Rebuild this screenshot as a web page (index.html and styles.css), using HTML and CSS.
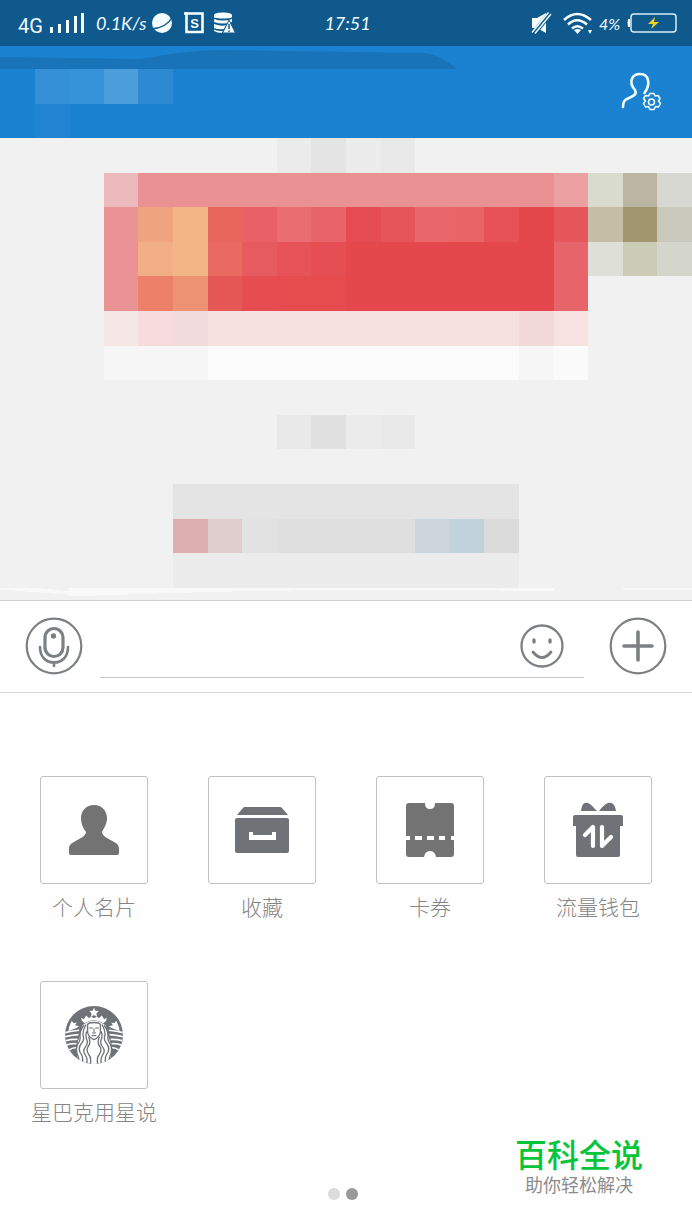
FILE: index.html
```html
<!DOCTYPE html>
<html lang="zh-CN">
<head>
<meta charset="utf-8">
<meta name="viewport" content="width=device-width, initial-scale=1">
<title>聊天</title>
<link rel="stylesheet" href="styles.css">
</head>
<body>
<div class="screen">
  <div class="status">
    <div class="status-left">
      <span class="network">4G</span>
      <svg class="signal" width="36" height="22" viewBox="0 0 36 22" fill="#f0fcff"><path d="M1 15h3v6H1zM9 12h3v9H9zM17 8h3v13h-3zM25 4h3v17h-3zM32 1h3v20h-3z"/></svg>
      <span class="hand speed">0.1K/s</span>
      <svg class="planet" width="22" height="22" viewBox="0 0 22 22"><circle cx="11" cy="11" r="10" fill="#f4feff"/><path d="M0 17Q16 16 22 4" fill="none" stroke="#10598d" stroke-width="1.500"/></svg>
      <svg class="square-s" width="20" height="22" viewBox="0 0 20 22"><path d="M0 1.500h18.500v18.500H2.500V0" fill="none" stroke="#f4feff" stroke-width="2.600"/><text x="10.500" y="16" text-anchor="middle" class="s-letter">S</text></svg>
      <svg width="23" height="22" viewBox="0 0 23 22"><g fill="#f4feff"><path d="M1 3C1-.5 19-.5 19 3v2C19 7 1 7 1 5zM1 7q9 3 18 0v3q-9 3-18 0zM1 12q8 3 12 1l-2 4q-6 1-10-1zM1 17.500q4 2 9 1.500l-1 2q-5 0-8-2z"/><path d="M16 8l6.500 13h-13z" stroke="#10598d"/></g><path d="M16 12v5M16 18.500v1.500" stroke="#10598d" stroke-width="1.500"/></svg>
    </div>
    <span class="hand">17:51</span>
    <div class="status-right">
      <svg width="21" height="22" viewBox="0 0 21 22"><path d="M1 6h5L15 1v20l-9-5H1z" fill="#f4feff"/><path d="M1 21.500L18.500 .5M4 22L20 2" stroke="#10598d" stroke-width="3"/><path d="M1 20.500L17.500 .5M4 21.500L20 2" stroke="#f4feff" stroke-width="1.400"/></svg>
      <svg class="wifi" width="30" height="22" viewBox="0 0 30 22"><g fill="none" stroke="#f4feff" stroke-width="2.500"><path d="M1 8Q14-4 28 8M5 12.500Q14 4 24 12.500M9 16.500Q14 12 20 16.500"/></g><path d="M11 18q3.500-2 7 0L14.500 22zM25 18h4l-2 4z" fill="#f4feff"/></svg>
      <span class="hand percent">4%</span>
      <svg width="50" height="20" viewBox="0 0 50 20"><rect x="4" y="1" width="45" height="18" rx="3" fill="none" stroke="#d7edf8" stroke-width="1.500"/><path d="M3 6H1q-1 4 0 8h2z" fill="#f4feff"/><path d="M28 4l-7 7h5l-2 5 8-7h-5z" fill="#f3cf22"/></svg>
    </div>
  </div>

  <header class="header">
    <svg class="header-art" viewBox="0 0 692 92" preserveAspectRatio="none" aria-hidden="true">
      <path d="M0 11L140 13Q190 4 220 4L425 7Q440 9 457 23H0z" fill="#1873b9"/>
      <g shape-rendering="crispEdges"><path d="M35 23h35v35H35z" fill="#3590d8"/><path d="M69 23h35v35H69z" fill="#3793d9"/><path d="M104 23h35v35h-35z" fill="#4c9fdc"/><path d="M138 23h35v35h-35z" fill="#2d8ad2"/><path d="M35 58h35v34H35z" fill="#2185d3"/></g>
    </svg>
    <button class="icon-button" type="button" aria-label="联系人设置">
      <svg width="42" height="42" viewBox="0 0 42 42" fill="none" stroke="#f4feff"><path d="M3 36c0-5 1-7 6-9 6-3 8-4 6-8-7-8-3-16 5-16 9 0 11 10 4.500 19" stroke-width="2.600" stroke-linecap="round"/><path d="M30 22.500h4l1 2.500 3-.5 2 3-1.500 2.500 2 2.500-2 3.500-3-.5-1.500 3h-4l-1.500-3-3 .5-2-3.500 2-2.500-2-2.500 2-3 3 .5z" stroke-width="1.500" stroke-linejoin="round"/><circle cx="31.500" cy="31" r="3" stroke-width="1.500"/></svg>
    </button>
  </header>

  <main class="chat">
    <svg class="mosaic" viewBox="0 0 20 13.350" shape-rendering="crispEdges" aria-hidden="true">
      <path d="M8 0h1v1H8z" fill="#ebebeb"/><path d="M9 0h1v1H9z" fill="#e4e4e4"/><path d="M10 0h1v1h-1z" fill="#ececec"/><path d="M11 0h1v1h-1z" fill="#e9e9e9"/>
      <path d="M3 1h1v1H3z" fill="#ecbabc"/><path d="M4 1h12v1H4z" fill="#ea9193"/><path d="M16 1h1v1h-1z" fill="#eba0a2"/><path d="M17 1h1v1h-1z" fill="#d9dbcf"/><path d="M18 1h1v1h-1z" fill="#bab6a2"/><path d="M19 1h1v1h-1z" fill="#d7d8d1"/>
      <path d="M3 2h1v3H3z" fill="#ea9395"/><path d="M7 2h9v3H7z" fill="#e4484c"/>
      <path d="M4 2h1v1H4z" fill="#efa37f"/><path d="M5 2h1v2H5z" fill="#f2b686"/><path d="M6 2h1v1H6z" fill="#e8665c"/><path d="M7 2h1v1H7z" fill="#e96167"/><path d="M8 2h1v1H8z" fill="#e96d71"/><path d="M9 2h1v1H9z" fill="#e96469"/><path d="M10 2h1v1h-1z" fill="#e54c53"/><path d="M11 2h1v1h-1z" fill="#e6555a"/><path d="M12 2h1v1h-1z" fill="#e9676a"/><path d="M13 2h1v1h-1z" fill="#e96568"/><path d="M14 2h1v1h-1z" fill="#e65255"/><path d="M16 2h1v1h-1z" fill="#e6565b"/><path d="M17 2h1v1h-1z" fill="#c6bda5"/><path d="M18 2h1v1h-1z" fill="#a2966f"/><path d="M19 2h1v1h-1z" fill="#c9c8bc"/>
      <path d="M4 3h1v1H4z" fill="#f2ae85"/><path d="M6 3h1v1H6z" fill="#e96a60"/><path d="M7 3h1v1H7z" fill="#e65b5f"/><path d="M8 3h1v1H8z" fill="#e65459"/><path d="M9 3h1v1H9z" fill="#e54f54"/><path d="M16 3h1v2h-1z" fill="#e7646a"/><path d="M17 3h1v1h-1z" fill="#dee0d8"/><path d="M18 3h1v1h-1z" fill="#cbccb6"/><path d="M19 3h1v1h-1z" fill="#d5d6cb"/>
      <path d="M4 4h1v1H4z" fill="#ed8069"/><path d="M5 4h1v1H5z" fill="#ed9273"/><path d="M6 4h1v1H6z" fill="#e65855"/><path d="M7 4h1v1H7z" fill="#e54d50"/><path d="M8 4h2v1H8z" fill="#e64b4e"/>
      <path d="M3 5h1v1H3z" fill="#f5e7e6"/><path d="M4 5h1v1H4z" fill="#f6dcdc"/><path d="M5 5h1v1H5z" fill="#f2dbdc"/><path d="M6 5h9v1H6z" fill="#f6e0e0"/><path d="M15 5h1v1h-1z" fill="#f1d9da"/><path d="M16 5h1v1h-1z" fill="#f5e2e1"/>
      <path d="M3 6h3v1H3z" fill="#f6f6f6"/><path d="M6 6h9v1H6z" fill="#fcfcfc"/><path d="M15 6h1v1h-1z" fill="#f6f6f6"/><path d="M16 6h1v1h-1z" fill="#fafafa"/>
      <path d="M8 8h1v1H8z" fill="#e9e9e9"/><path d="M9 8h1v1H9z" fill="#e1e1e1"/><path d="M10 8h1v1h-1z" fill="#ebebeb"/><path d="M11 8h1v1h-1z" fill="#e9e9e9"/>
      <path d="M5 10h10v1H5z" fill="#e4e4e4"/><path d="M5 11h1v1H5z" fill="#dcaeae"/><path d="M6 11h1v1H6z" fill="#dfcecd"/><path d="M7 11h1v1H7z" fill="#e2e2e2"/><path d="M8 11h4v1H8z" fill="#dfdfdf"/><path d="M12 11h1v1h-1z" fill="#ccd6db"/><path d="M13 11h1v1h-1z" fill="#c3d3db"/><path d="M14 11h1v1h-1z" fill="#dbdbdb"/><path d="M5 12h10v1H5z" fill="#ececec"/>
      <path d="M0 13h1l1 .1v.1L0 13.050zM2 13h14v.1q-6-.1-11 .05l-3 .1zM18 13h2v.05h-2z" fill="#f9f9f9"/>
    </svg>
  </main>

  <form class="composer">
    <button class="icon-button" type="button" aria-label="语音">
      <svg width="58" height="58" viewBox="0 0 58 58" fill="none" stroke="#7d8083"><circle cx="29" cy="29" r="27.300" stroke-width="2.200"/><rect x="20" y="11.500" width="18" height="28" rx="9" stroke-width="3.200"/><path d="M15 30c0 10 6 15.500 14 15.500S43 40 43 30M29 45v4" stroke-width="2.600" stroke-linecap="round"/><circle cx="28.500" cy="19" r="2.700" fill="#7d8083" stroke="none"/></svg>
    </button>
    <div class="field">
      <input class="message" type="text" aria-label="消息">
      <button class="icon-button" type="button" aria-label="表情">
        <svg width="44" height="44" viewBox="0 0 44 44" fill="none" stroke="#7d8083"><circle cx="22" cy="22" r="20.500" stroke-width="2.300"/><path d="M14 16v2M30 16v2" stroke-width="3.300" stroke-linecap="round"/><path d="M13 28q9 11 18 0" stroke-width="2.800" stroke-linecap="round"/></svg>
      </button>
    </div>
    <button class="icon-button" type="button" aria-label="更多">
      <svg width="58" height="58" viewBox="0 0 58 58" fill="none" stroke="#7d8083"><circle cx="29" cy="29" r="27.300" stroke-width="2.200"/><path d="M29 15v28M15 29h28" stroke-width="3.600" stroke-linecap="round"/></svg>
    </button>
  </form>

  <section class="panel">
    <div class="apps">
      <button class="app" type="button">
        <span class="tile"><svg width="52" height="52" viewBox="0 0 52 52"><path d="M26 1c8 0 13 6 13 13 0 6-3 10-5 14 0 4 7 7 12 10 4 2 5 4 5 7v4q0 2-2 2H3q-2 0-2-2v-4c0-3 1-5 5-7 5-3 12-6 12-10-3-4-5-8-5-14C13 7 18 1 26 1z" fill="#737373"/></svg></span>
        <span class="label">个人名片</span>
      </button>
      <button class="app" type="button">
        <span class="tile"><svg width="56" height="48" viewBox="0 0 56 48"><path d="M10 1h36q1 0 2 1l6 7H3l6-7zM3 12h50q2 0 2 2v31q0 2-2 2H3q-2 0-2-2V14q0-2 2-2z" fill="#6f7377"/><path d="M15 26h4v3h19v-3h4v8H15z" fill="#fff"/></svg></span>
        <span class="label">收藏</span>
      </button>
      <button class="app" type="button">
        <span class="tile"><svg width="48" height="56" viewBox="0 0 48 56"><path d="M3 1h16q0 6 5 6t5-6h16q3 0 3 3v30h-3v4h3v14q0 3-3 3H30q-1-6-6-6t-6 6H3q-3 0-3-3V38h4v-4H0V4q0-3 3-3z" fill="#737373"/><path d="M9 34h7v4H9zM21 34h7v4h-7zM33 34h6v4h-6z" fill="#fff"/></svg></span>
        <span class="label">卡券</span>
      </button>
      <button class="app" type="button">
        <span class="tile"><svg width="52" height="56" viewBox="0 0 52 56"><path d="M9 9c1-7 3-9 7-8 3 1 6 5 9 8zM27 9c3-4 6-7 9-8 4-1 7 1 8 8zM3 13h46q2 0 2 2v9h-3v29q0 2-2 2H6q-2 0-2-2V24H1v-9q0-2 2-2z" fill="#6f7377"/><path d="M13 33l8-8v19M30 25v19l9-9" fill="none" stroke="#fff" stroke-width="4.200" stroke-linecap="round" stroke-linejoin="round"/></svg></span>
        <span class="label">流量钱包</span>
      </button>
      <button class="app" type="button">
        <span class="tile"><svg width="58" height="58" viewBox="0 0 172 172">
          <defs><clipPath id="disc"><circle cx="86" cy="86" r="86"/></clipPath></defs>
          <g clip-path="url(#disc)">
            <path d="M0 0h172v172H0z" fill="#6f7377"/>
            <g fill="#fff">
              <path d="M86 5l4 9 10 1-7 7 2 10-9-5-9 5 2-10-7-7 10-1z"/>
              <path d="M50 44l-2-9 8 4 7-11 8 8 6-5 9 5 9-5 6 5 8-8 7 11 8-4-2 9-8 7Q86 34 58 51z"/>
              <path d="M12 63l8-19 6 7 9-2-5 8 12 3-8 5q-15 5-24 10zM160 63l-8-19-6 7-9-2 5 8-12 3 8 5q15 5 24 10z"/>
              <path d="M51 58Q86 30 121 58q5 30 12 45 10 29-3 69H42q-13-40-3-69 7-15 12-45z"/>
            </g>
            <path d="M0 79q18-4 42-7M0 91q20-4 40-6M1 103q18-5 36-4M4 116q14-6 30-4M12 131q10-8 20-7M172 79q-18-4-42-7M172 91q-20-4-40-6M171 103q-18-5-36-4M168 116q-14-6-30-4M160 131q-10-8-20-7" fill="none" stroke="#fff" stroke-width="5"/>
            <g fill="none" stroke="#6f7377" stroke-width="4">
              <path d="M67 56q1-7 19-7t19 7v22q-4 16-19 22-15-6-19-22z"/>
              <path d="M62 55Q51 75 54 90q4 10-4 19-15 18-1 35 6 12 2 28M56 57Q42 75 45 94q0 10-7 18-8 18 0 35 5 12 2 25M64 75q-4 16 1 25 4 13-5 22-9 12 1 24 7 12 3 26M70 91q6 13 2 24-12 15-2 28 9 10 5 29"/>
              <path d="M110 55q11 20 8 35-4 10 4 19 15 18 1 35-6 12-2 28M116 57q14 18 11 37 0 10 7 18 8 18 0 35-5 12-2 25M108 75q4 16-1 25-4 13 5 22 9 12-1 24-7 12-3 26M102 91q-6 13-2 24 12 15 2 28-9 10-5 29"/>
              <path d="M72 66q5-3 10 0M90 66q5-3 10 0M86 66v12M80 79q6 3 12 0M79 87q7 3 14 0" stroke-width="3"/>
            </g>
          </g></svg></span>
        <span class="label">星巴克用星说</span>
      </button>
    </div>
    <div class="pager"><span class="dot"></span><span class="dot current"></span></div>
    <div class="watermark"><strong class="mark-title">百科全说</strong><span class="mark-sub">助你轻松解决</span></div>
  </section>
</div>
</body>
</html>
```
FILE: styles.css
```css
* { box-sizing: border-box; }
body {
  margin: 0;
  background: #fefefe;
  font-family: "Liberation Sans", "Noto Sans CJK SC", sans-serif;
}
button {
  margin: 0;
  padding: 0;
  border: 0;
  background: none;
  font: inherit;
}
svg { display: block; flex: none; }
.screen {
  display: flex;
  flex-direction: column;
  min-height: 100vh;
}
.status {
  display: grid;
  grid-template-columns: 1fr auto 1fr;
  align-items: center;
  height: 46px;
  padding: 0 15px 0 18px;
  background: #10598d;
  color: #f0fcff;
}
.status-left, .status-right {
  display: flex;
  align-items: center;
}
.status-right { justify-content: flex-end; }
.network {
  width: 31px;
  padding-top: 6px;
  font-family: Roboto, sans-serif;
  font-size: 20px;
}
.hand {
  font-family: Lato, sans-serif;
  font-size: 18px;
  font-style: italic;
  font-weight: 400;
  white-space: nowrap;
}
.signal { margin-right: 11px; }
.speed { width: 55px; }
.planet { margin-right: 11px; }
.square-s { margin-right: 9px; }
.s-letter {
  fill: #f4feff;
  font: bold 13px "Liberation Sans", sans-serif;
}
.wifi { margin: 0 6px 0 11px; }
.percent { width: 28px; font-size: 16px; }
.header {
  position: relative;
  display: flex;
  justify-content: flex-end;
  align-items: center;
  height: 92px;
  padding: 0 30px;
  background: #1b82d2;
}
.header-art {
  position: absolute;
  inset: 0;
  width: 100%;
  height: 100%;
}
.header .icon-button { position: relative; }
.chat { background: #f1f1f1; }
.mosaic { width: 100%; height: auto; }
.composer {
  display: flex;
  justify-content: space-between;
  align-items: center;
  height: 93px;
  padding: 0 25px;
  border-top: 1px solid #cfcfcf;
  border-bottom: 1px solid #d6d6d6;
  background: #fff;
}
.field {
  display: flex;
  flex: 1;
  align-items: center;
  height: 64px;
  margin: 0 25px 0 17px;
  padding-right: 20px;
  border-bottom: 1px solid #c4c4c4;
}
.message {
  flex: 1;
  min-width: 0;
  height: 44px;
  border: 0;
  outline: 0;
  background: transparent;
  font: inherit;
  font-size: 24px;
}
.panel {
  position: relative;
  display: flex;
  flex: 1;
  flex-direction: column;
  justify-content: space-between;
  padding: 83px 10px 30px;
}
.apps {
  display: grid;
  grid-template-columns: repeat(4, 1fr);
  row-gap: 59px;
}
.app {
  display: flex;
  flex-direction: column;
  align-items: center;
  gap: 6px;
}
.tile {
  display: flex;
  align-items: center;
  justify-content: center;
  width: 108px;
  height: 108px;
  border: 1px solid #c2c2c2;
  border-radius: 3px;
  background: #fff;
}
.label {
  color: #858585;
  font-family: "Noto Sans CJK SC", sans-serif;
  font-size: 21px;
  font-weight: 300;
  line-height: 32px;
  white-space: nowrap;
}
.pager {
  display: flex;
  justify-content: center;
  gap: 6px;
  padding-right: 6px;
}
.dot {
  width: 12px;
  height: 12px;
  border-radius: 50%;
  background: #dcdcdc;
}
.dot.current { background: #999; }
.watermark {
  position: absolute;
  right: 49px;
  bottom: 32px;
  display: flex;
  flex-direction: column;
  align-items: center;
}
.mark-title {
  color: #08c43b;
  font-size: 32px;
  font-weight: 500;
  line-height: 36px;
}
.mark-sub {
  color: #8c8c8c;
  font-size: 18px;
  line-height: 24px;
}
```
